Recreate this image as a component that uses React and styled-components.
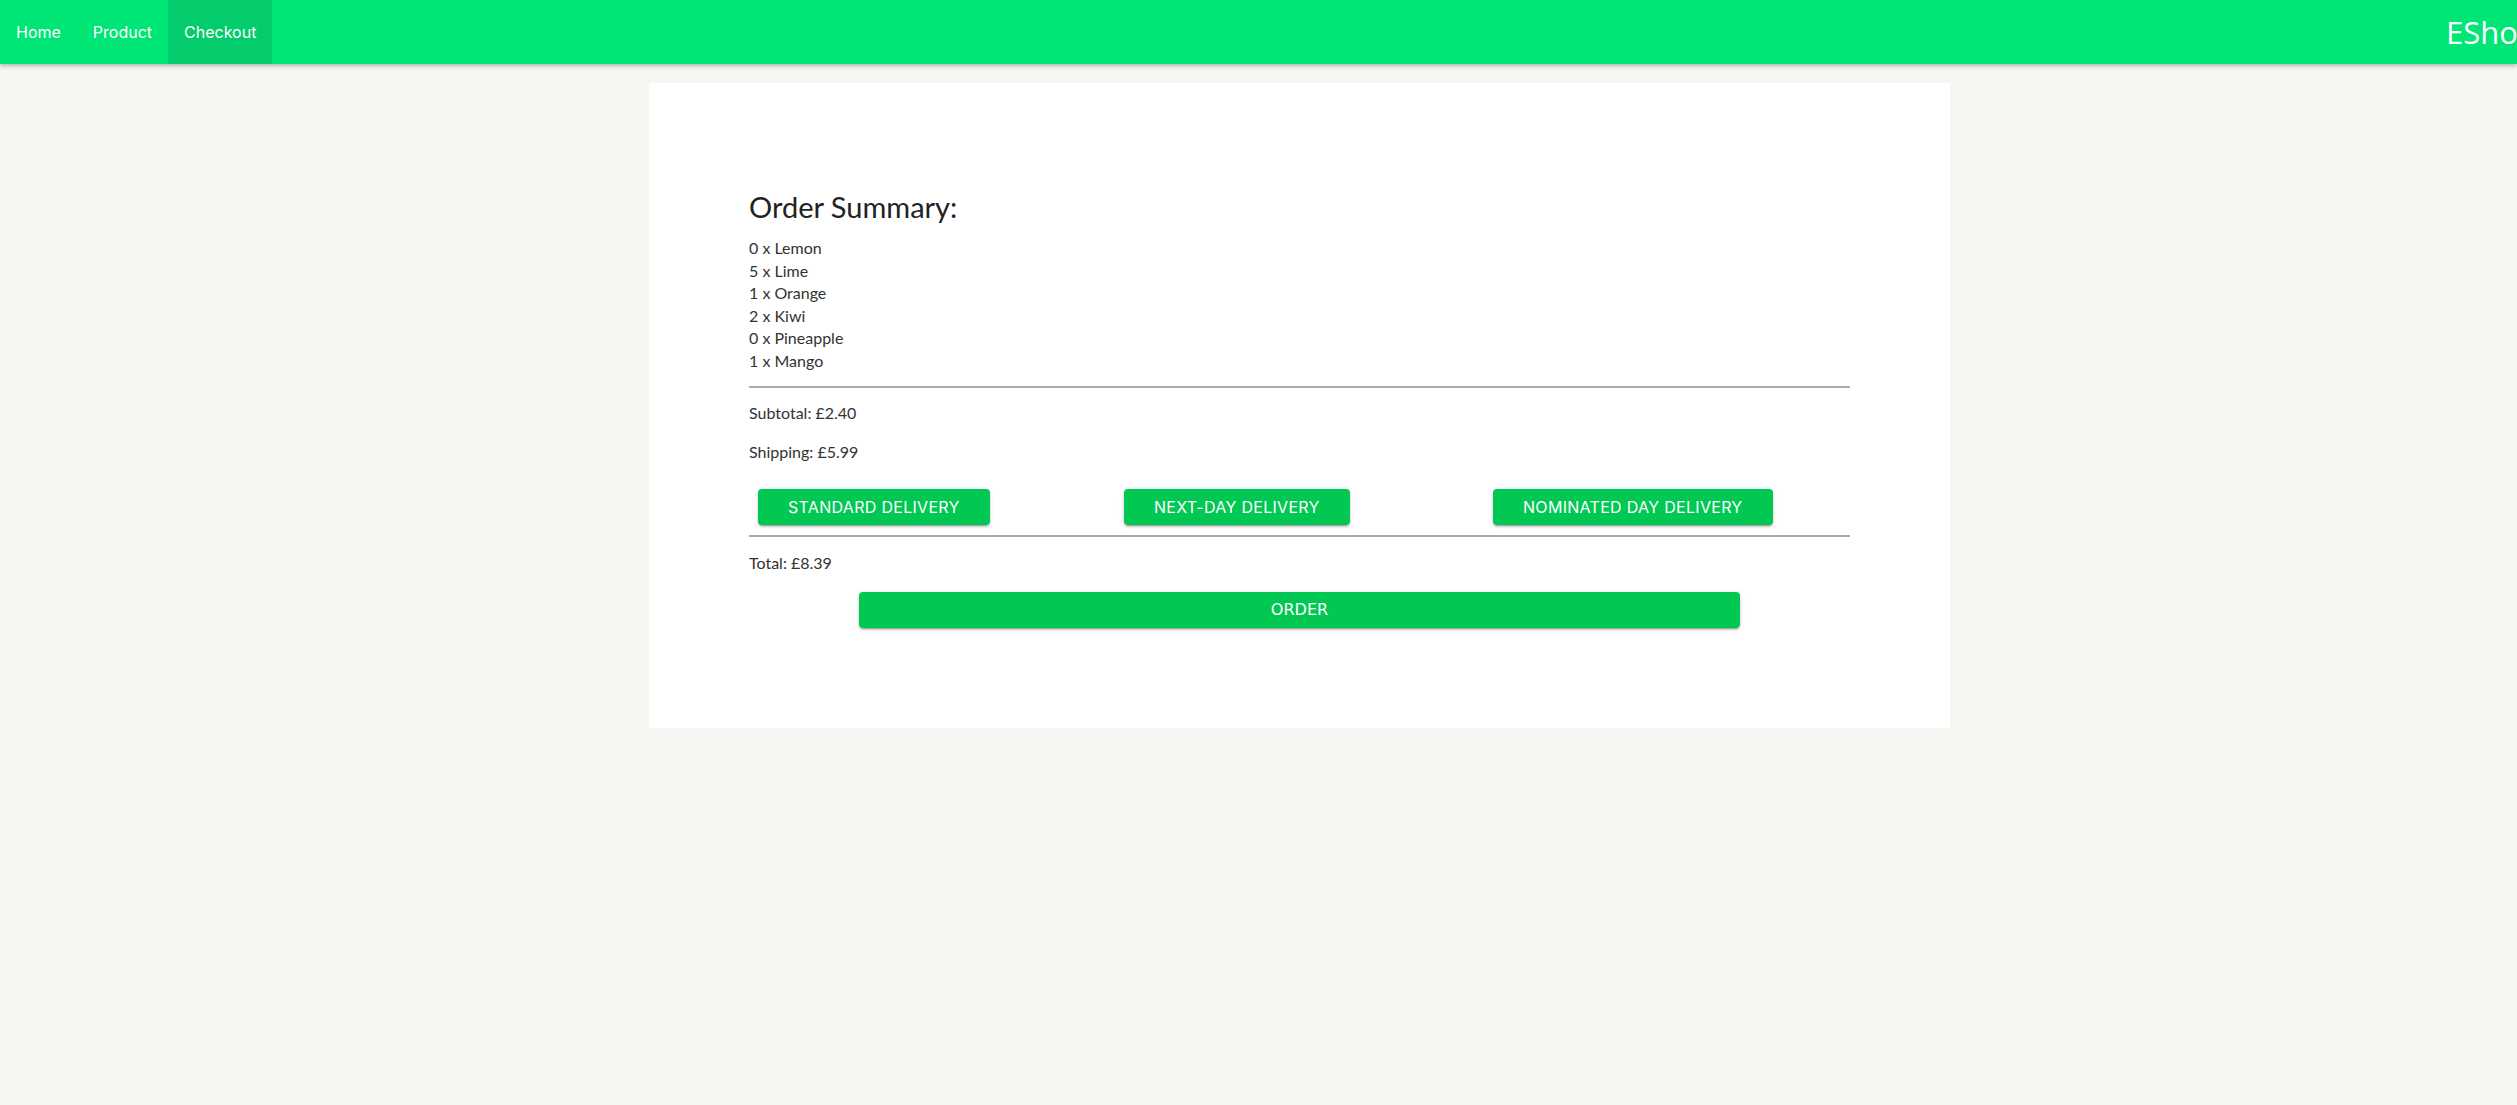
import React from "react";
import styled, { createGlobalStyle } from "styled-components";

const GlobalStyle = createGlobalStyle`
  html, body {
    margin: 0;
    padding: 0;
    background-color: #f5f5f1;
    font-family: Lato, "Noto Sans", sans-serif;
    color: #333;
  }
  #root {
    min-height: 1105px;
  }
`;

const Navbar = styled.nav`
  display: flex;
  align-items: stretch;
  height: 64px;
  background-color: #00e676;
  box-shadow: 0 2px 4px rgba(0, 0, 0, 0.25);
  overflow: hidden;
`;

const NavLink = styled.a`
  display: flex;
  align-items: center;
  padding: 0 16px;
  color: #fff;
  font-family: Inter, "Noto Sans", sans-serif;
  font-size: 16px;
  text-decoration: none;
  background-color: ${(p) => (p.active ? "#04cc6c" : "transparent")};
`;

const Brand = styled.div`
  margin-left: auto;
  flex: 0 0 71px;
  width: 71px;
  min-width: 0;
  display: flex;
  align-items: center;
  white-space: nowrap;
  color: #fff;
  font-family: "Open Sans", sans-serif;
  font-size: 31px;
`;

const Page = styled.div`
  display: flex;
  justify-content: center;
  padding: 19px 0 0 82px;
`;

const Card = styled.main`
  width: 1101px;
  padding: 100px;
  background-color: #fff;
`;

const Heading = styled.h2`
  margin: 7px 0 13px;
  font-size: 29px;
  font-weight: 400;
  line-height: 34px;
  color: #222;
`;

const ItemList = styled.ul`
  list-style: none;
  margin: 0;
  padding: 0;
`;

const Item = styled.li`
  font-size: 16px;
  line-height: 22.5px;
  color: #333;
`;

const Divider = styled.hr`
  margin: ${(p) => p.margin || "14px 0 14px"};
  border: none;
  border-top: 2px solid #aaa;
`;

const Line = styled.p`
  margin: 0 0 ${(p) => p.gap || "16px"};
  font-size: 16px;
  line-height: 22.5px;
`;

const DeliveryRow = styled.div`
  display: grid;
  grid-template-columns: repeat(3, 1fr);
  margin-top: 26px;
`;

const Button = styled.button`
  justify-self: start;
  height: 36px;
  margin-left: ${(p) => p.offset || "9px"};
  padding: 0 30px;
  border: none;
  border-radius: 4px;
  background-color: #00c853;
  color: #fff;
  font-family: Inter, "Noto Sans", sans-serif;
  font-size: 16px;
  letter-spacing: 0.3px;
  text-transform: uppercase;
  box-shadow: 0 3px 1px -2px rgba(0, 0, 0, 0.2), 0 2px 2px 0 rgba(0, 0, 0, 0.14),
    0 1px 5px 0 rgba(0, 0, 0, 0.12);
  cursor: pointer;
`;

const OrderButton = styled(Button)`
  display: block;
  width: 80%;
  margin: 17px auto 0;
  font-family: "DejaVu Sans", sans-serif;
  font-size: 16px;
  letter-spacing: 0;
`;

const items = [
  ["0", "Lemon"],
  ["5", "Lime"],
  ["1", "Orange"],
  ["2", "Kiwi"],
  ["0", "Pineapple"],
  ["1", "Mango"],
];

export default function App() {
  return (
    <>
      <GlobalStyle />
      <Navbar>
        <NavLink href="#">Home</NavLink>
        <NavLink href="#">Product</NavLink>
        <NavLink href="#" active>
          Checkout
        </NavLink>
        <Brand>EShop</Brand>
      </Navbar>
      <Page>
        <Card>
          <Heading>Order Summary:</Heading>
          <ItemList>
            {items.map(([qty, name]) => (
              <Item key={name}>
                {qty} x {name}
              </Item>
            ))}
          </ItemList>
          <Divider />
          <Line>Subtotal: £2.40</Line>
          <Line gap="0">Shipping: £5.99</Line>
          <DeliveryRow>
            <Button>Standard Delivery</Button>
            <Button offset="8px">Next-Day Delivery</Button>
            <Button offset="10px">Nominated Day Delivery</Button>
          </DeliveryRow>
          <Divider margin="10px 0 15px" />
          <Line gap="0">Total: £8.39</Line>
          <OrderButton>Order</OrderButton>
        </Card>
      </Page>
    </>
  );
}
